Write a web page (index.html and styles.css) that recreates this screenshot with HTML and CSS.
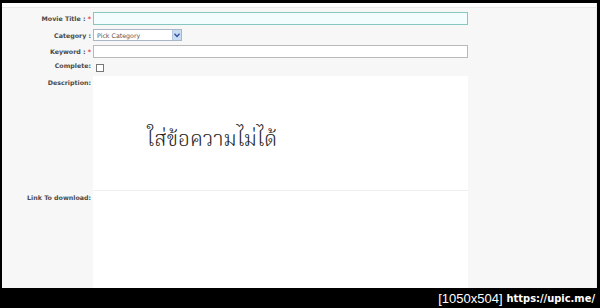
FILE: index.html
```html
<!DOCTYPE html>
<html lang="en">
<head>
    <meta charset="UTF-8">
    <title>Add Movie</title>
    <link rel="stylesheet" href="styles.css">
</head>
<body>
    <div class="page">
        <div class="topline"></div>
        <form class="movie-form">
            <div class="row row-title">
                <label class="label">Movie Title : <span class="req">*</span></label>
                <input class="text focused" type="text">
            </div>
            <div class="row row-cat">
                <label class="label">Category :</label>
                <span class="select">
                    <span class="select-text">Pick Category</span>
                    <span class="select-btn">
                        <svg width="6" height="5" viewBox="0 0 6 5"><path d="M0.5 0.8 L3 3.5 L5.5 0.8" fill="none" stroke="#2d4f9e" stroke-width="1.3"/></svg>
                    </span>
                </span>
            </div>
            <div class="row row-key">
                <label class="label">Keyword : <span class="req">*</span></label>
                <input class="text" type="text">
            </div>
            <div class="row row-done">
                <label class="label">Complete:</label>
                <input class="check" type="checkbox">
            </div>
            <div class="row row-desc">
                <label class="label">Description:</label>
                <div class="area desc-area">
                    <p class="thai">ใส่ข้อความไม่ได้</p>
                </div>
            </div>
            <div class="row row-link">
                <label class="label">Link To download:</label>
                <div class="area link-area"></div>
            </div>
        </form>
    </div>
    <div class="stamp">
        <span class="size">[1050x504]</span><span class="url">https://upic.me/</span>
    </div>
</body>
</html>
```

FILE: styles.css
```css
body {
    margin: 0;
    background: #000;
    width: 600px;
    height: 308px;
    overflow: hidden;
    font-family: 'DejaVu Sans', Verdana, sans-serif;
}
.page {
    margin: 3px 3px 0 2px;
    height: 285px;
    background: #f7f7f7;
    border-right: 1px solid #ececec;
    overflow: hidden;
}
.topline {
    height: 4px;
    background: #fdfdfd;
    border-bottom: 1px solid #e9e9e9;
}
.movie-form {
    padding-top: 4px;
}
.row {
    display: flex;
    align-items: flex-start;
}
.label {
    width: 89px;
    flex: none;
    text-align: right;
    padding-right: 2px;
    font-size: 6.3px;
    font-weight: bold;
    color: #4a4a4a;
    white-space: nowrap;
}
.req {
    color: #e23b3b;
}
.row-title, .row-key {
    height: 13px;
    align-items: center;
}
.row-title { margin-bottom: 4px; }
.row-cat {
    height: 12px;
    margin-bottom: 4px;
    align-items: center;
}
.row-key { margin-bottom: 5px; }
.row-done {
    height: 9px;
    margin-bottom: 4px;
}
.row-done .label {
    margin-top: -1px;
}
.text {
    box-sizing: border-box;
    width: 375px;
    height: 13px;
    margin: 0;
    border: 1px solid #b9b9b9;
    background: #fff;
    padding: 0;
}
.text.focused {
    border-color: #86c7bf;
    background: #f4fdfd;
}
.select {
    box-sizing: border-box;
    display: flex;
    align-items: center;
    width: 89px;
    height: 12px;
    border: 1px solid #a9b6c6;
    background: #fff;
}
.select-text {
    flex: 1;
    padding-left: 3px;
    font-size: 6.3px;
    color: #555;
}
.select-btn {
    display: flex;
    align-items: center;
    justify-content: center;
    width: 8px;
    height: 10px;
    background: #c9dbf1;
    border-left: 1px solid #b3c7e2;
}
.check {
    appearance: none;
    box-sizing: border-box;
    width: 8px;
    height: 8px;
    margin: 1px 0 0 3px;
    border: 1px solid #777;
    background: #fff;
}
.area {
    box-sizing: border-box;
    width: 375px;
    background: #fff;
}
.row-desc .label {
    padding-top: 3px;
}
.desc-area {
    height: 115px;
    border-bottom: 1px solid #efefef;
    padding: 51px 0 0 54px;
}
.thai {
    margin: 0;
    font-family: 'Liberation Serif', 'Noto Serif Thai', 'Noto Sans Thai', serif;
    font-size: 21px;
    font-weight: 300;
    line-height: 25px;
    color: #262626;
}
.row-link .label {
    padding-top: 3px;
}
.link-area {
    height: 100px;
}
.stamp {
    height: 20px;
    display: flex;
    justify-content: flex-end;
    align-items: center;
    padding-right: 5px;
    color: #fff;
}
.size {
    font-family: 'Liberation Sans', Arial, sans-serif;
    font-size: 13px;
    margin-right: 4px;
}
.url {
    font-family: 'DejaVu Sans Condensed', 'DejaVu Sans', sans-serif;
    font-size: 11px;
    font-weight: bold;
}
```
